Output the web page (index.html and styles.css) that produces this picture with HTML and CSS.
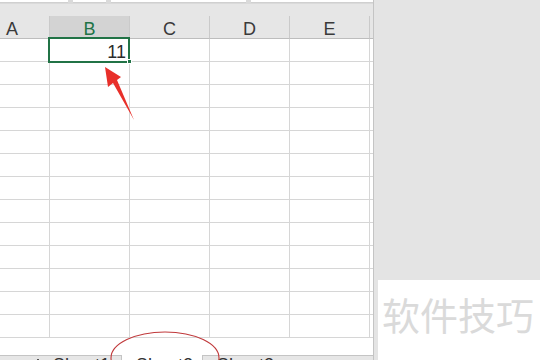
FILE: index.html
```html
<!DOCTYPE html>
<html lang="zh">
<head>
<meta charset="utf-8">
<title>Sheet</title>
<link rel="stylesheet" href="styles.css">
</head>
<body>
<div class="app">
  <div class="sheet">
    <div class="topbar">
      <div class="box b1"></div>
      <div class="box b2"></div>
      <div class="box b3"></div>
      <div class="box b4"></div>
    </div>
    <div class="gapbar"></div>
    <div class="grid">
      <div class="hd">A</div><div class="hd selcol">B</div><div class="hd">C</div><div class="hd">D</div><div class="hd">E</div><div class="hd end"></div>
      <div class="c"></div><div class="c active"><span class="val">11</span><i class="sel"></i><i class="handle"></i></div><div class="c"></div><div class="c"></div><div class="c"></div><div class="c end"></div>
      <div class="c"></div><div class="c"></div><div class="c"></div><div class="c"></div><div class="c"></div><div class="c end"></div>
      <div class="c"></div><div class="c"></div><div class="c"></div><div class="c"></div><div class="c"></div><div class="c end"></div>
      <div class="c"></div><div class="c"></div><div class="c"></div><div class="c"></div><div class="c"></div><div class="c end"></div>
      <div class="c"></div><div class="c"></div><div class="c"></div><div class="c"></div><div class="c"></div><div class="c end"></div>
      <div class="c"></div><div class="c"></div><div class="c"></div><div class="c"></div><div class="c"></div><div class="c end"></div>
      <div class="c"></div><div class="c"></div><div class="c"></div><div class="c"></div><div class="c"></div><div class="c end"></div>
      <div class="c"></div><div class="c"></div><div class="c"></div><div class="c"></div><div class="c"></div><div class="c end"></div>
      <div class="c"></div><div class="c"></div><div class="c"></div><div class="c"></div><div class="c"></div><div class="c end"></div>
      <div class="c"></div><div class="c"></div><div class="c"></div><div class="c"></div><div class="c"></div><div class="c end"></div>
      <div class="c"></div><div class="c"></div><div class="c"></div><div class="c"></div><div class="c"></div><div class="c end"></div>
      <div class="c"></div><div class="c"></div><div class="c"></div><div class="c"></div><div class="c"></div><div class="c end"></div>
      <div class="c"></div><div class="c"></div><div class="c"></div><div class="c"></div><div class="c"></div><div class="c end"></div>
    </div>
    <div class="tabs">
      <div class="nav"><i class="navmark"></i></div>
      <div class="tab">Sheet1</div>
      <div class="tab current">Sheet2</div>
      <div class="tab last">Sheet3</div>
    </div>
  </div>
  <div class="side">
    <div class="wm">软件技巧</div>
  </div>
  <svg class="annot" width="540" height="360" viewBox="0 0 540 360">
    <polygon points="105,67 121,77 117,80 134,120 113,83 108,87" fill="#e8302a"/>
    <ellipse cx="165" cy="358" rx="54" ry="26" fill="none" stroke="#c0393b" stroke-width="1.1"/>
  </svg>
</div>
</body>
</html>
```

FILE: styles.css
```css
* { box-sizing: border-box; }
html, body { margin: 0; padding: 0; }
body {
  width: 540px;
  height: 360px;
  overflow: hidden;
  background: #e4e4e4;
  font-family: "Liberation Sans", Arial, sans-serif;
}
.app {
  position: relative;
  display: flex;
  width: 540px;
  height: 360px;
}
.sheet {
  width: 374px;
  height: 360px;
  display: flex;
  flex-direction: column;
  border-right: 1px solid #c4c4c4;
  background: #e6e6e6;
}
.topbar {
  height: 4px;
  display: flex;
  gap: 5px;
  background: #dadada;
}
.box {
  height: 3px;
  background: #ffffff;
  border-bottom: 1px solid #d0d0d0;
}
.b1 { width: 68px; }
.b2 { width: 33px; }
.b3 { width: 135px; }
.b4 { width: 122px; }
.gapbar {
  height: 12px;
  background: #e6e6e6;
}
.grid {
  flex: 1;
  min-height: 0;
  overflow: hidden;
  display: grid;
  grid-template-columns: 50px 80px 80px 80px 80px 3px;
  grid-auto-rows: 23px;
  background: #ffffff;
}
.hd {
  background: #e6e6e6;
  border-right: 1px solid #cacaca;
  border-bottom: 1px solid #bdbdbd;
  color: #3a3a3a;
  font-size: 18px;
  line-height: 18px;
  padding-top: 4px;
  text-align: center;
}
.hd:first-child { text-align: right; padding-right: 31px; }
.hd.selcol {
  background: #d3d3d3;
  color: #217346;
}
.hd.end { border-right: none; }
.c {
  border-right: 1px solid #d6d6d6;
  border-bottom: 1px solid #d6d6d6;
}
.c.end { border-right: none; }
.c.active {
  position: relative;
  text-align: right;
  padding-right: 3px;
  padding-top: 4px;
}
.val {
  display: block;
  font-size: 18px;
  line-height: 18px;
  color: #2b2b2b;
}
.sel {
  position: absolute;
  left: -2px;
  top: -2px;
  width: 82px;
  height: 26px;
  border: 2px solid #217346;
}
.handle {
  position: absolute;
  left: 77px;
  top: 20px;
  width: 5px;
  height: 5px;
  background: #217346;
  border: 1px solid #ffffff;
}
.tabs {
  height: 5px;
  display: flex;
  align-items: flex-start;
  overflow: hidden;
  background: #e6e6e6;
}
.nav {
  width: 40px;
  height: 30px;
  border-top: 1px solid #c4c4c4;
  position: relative;
}
.navmark {
  position: absolute;
  left: 37px;
  top: 3px;
  width: 2px;
  height: 3px;
  background: #555555;
}
.tab {
  width: 82px;
  height: 30px;
  border-top: 1px solid #c4c4c4;
  border-right: 1px solid #c4c4c4;
  font-size: 18px;
  line-height: 16px;
  padding-top: 1px;
  color: #333333;
  padding-left: 13px;
}
.tab.current {
  width: 81px;
  background: #ffffff;
  border-top: none;
  padding-top: 2px;
  padding-left: 14px;
}
.tab.last {
  flex: 1;
  border-right: none;
  padding-left: 14px;
}
.side {
  flex: 1;
  display: flex;
  flex-direction: column;
  justify-content: flex-end;
  padding-left: 4px;
}
.wm {
  height: 80px;
  background: #ffffff;
  font-family: "Noto Sans CJK SC", sans-serif;
  font-size: 38px;
  line-height: 38px;
  color: #dadada;
  padding-top: 15px;
  padding-left: 4px;
  white-space: nowrap;
  overflow: hidden;
}
.annot {
  position: absolute;
  left: 0;
  top: 0;
  pointer-events: none;
}
```
